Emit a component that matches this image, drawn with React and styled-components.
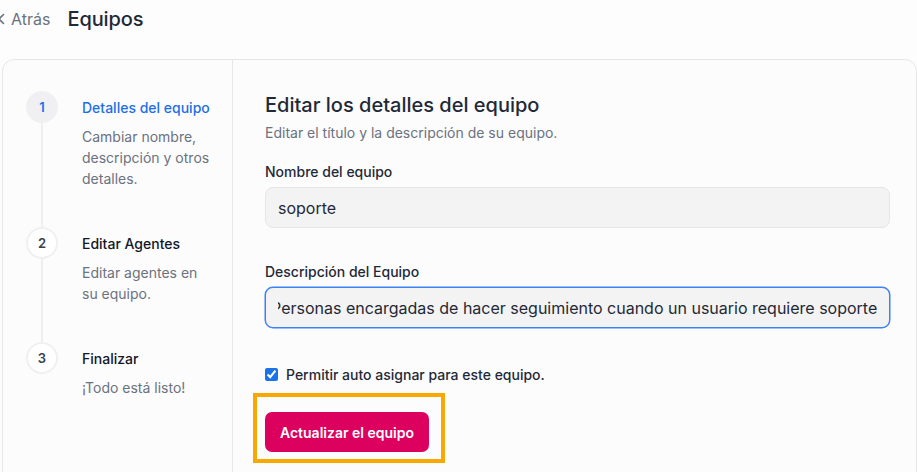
import React, { useEffect, useRef } from "react";
import styled, { createGlobalStyle } from "styled-components";

const Global = createGlobalStyle`
  html, body { margin: 0; padding: 0; background: #fdfdfd; }
  body { font-family: Inter, "Noto Sans", sans-serif; color: #1f2937; overflow: hidden; }
  * { box-sizing: border-box; }
`;

const Page = styled.div`
  width: 917px;
  height: 472px;
  overflow: hidden;
`;

const Header = styled.header`
  display: flex;
  align-items: center;
  height: 38px;
  padding-left: 0;
  gap: 17px;
`;

const Back = styled.a`
  display: flex;
  align-items: center;
  gap: 5px;
  margin-left: -3px;
  color: #6b7280;
  font-size: 16px;
  text-decoration: none;
`;

const Title = styled.h1`
  margin: 0;
  font-size: 20px;
  font-weight: 500;
  color: #1f2937;
  letter-spacing: -0.1px;
`;

const Card = styled.div`
  margin: 21px 0 0 2px;
  display: flex;
  border: 1px solid #e7e7e7;
  border-radius: 12px;
  background: #fcfcfc;
  min-height: 520px;
`;

const Sidebar = styled.nav`
  width: 230px;
  flex-shrink: 0;
  border-right: 1px solid #e7e7e7;
  padding: 31px 0 0 23px;
`;

const Step = styled.div`
  display: flex;
  gap: 24px;
`;

const Rail = styled.div`
  display: flex;
  flex-direction: column;
  align-items: center;
  width: 32px;
  flex-shrink: 0;
`;

const Circle = styled.div`
  width: 32px;
  height: 32px;
  border-radius: 50%;
  display: flex;
  align-items: center;
  justify-content: center;
  font-size: 13px;
  font-weight: 600;
  background: ${(p) => (p.$active ? "#f0f0f3" : "#ffffff")};
  border: 2px solid ${(p) => (p.$active ? "#f0f0f3" : "#f0f0f0")};
  color: ${(p) => (p.$active ? "#1d6ee8" : "#374151")};
`;

const Line = styled.div`
  width: 2px;
  flex: 1;
  background: #eeeeee;
`;

const StepBody = styled.div`
  padding-bottom: 38px;
`;

const StepTitle = styled.div`
  height: 32px;
  display: flex;
  align-items: center;
  font-size: 14px;
  font-weight: 500;
  color: ${(p) => (p.$active ? "#1d6ee8" : "#111827")};
`;

const StepDesc = styled.div`
  margin-top: 3px;
  font-size: 14px;
  line-height: 21px;
  color: #6b7280;
  width: 130px;
`;

const Main = styled.main`
  flex: 1;
  padding: 31px 26px 0 32px;
  display: flex;
  flex-direction: column;
`;

const Heading = styled.h2`
  margin: 0;
  font-size: 20px;
  line-height: 28px;
  font-weight: 500;
  color: #1f2937;
`;

const Sub = styled.p`
  margin: 4px 0 0;
  font-size: 14px;
  line-height: 20px;
  color: #6b7280;
`;

const Label = styled.label`
  display: block;
  margin-top: ${(p) => p.$mt}px;
  font-size: 14px;
  line-height: 20px;
  font-weight: 500;
  color: #1f2937;
`;

const Input = styled.input`
  display: block;
  width: 100%;
  height: 41px;
  margin-top: 5px;
  padding: 0 12px;
  font-family: Inter, "Noto Sans", sans-serif;
  font-size: 16px;
  color: #1f2937;
  background: #f3f3f3;
  border: 1px solid ${(p) => (p.$focus ? "#3b82f6" : "#e6e6e6")};
  border-radius: 8px;
  outline: none;
  box-shadow: ${(p) => (p.$focus ? "0 0 0 0.5px #3b82f6" : "none")};
`;

const CheckRow = styled.label`
  margin-top: 36px;
  display: flex;
  align-items: center;
  gap: 8px;
  height: 20px;
  font-size: 14px;
  font-weight: 500;
  color: #1f2937;
`;

const Check = styled.input`
  margin: 0;
  width: 13px;
  height: 13px;
  accent-color: #1a73e8;
`;

const ButtonWrap = styled.div`
  position: relative;
  margin-top: 28px;
  align-self: flex-start;
  &::after {
    content: "";
    position: absolute;
    top: -19px;
    left: -12px;
    right: -16px;
    bottom: -11px;
    border: 4px solid #f8a800;
    pointer-events: none;
  }
`;

const Button = styled.button`
  display: block;
  width: 164px;
  height: 40px;
  border: none;
  border-radius: 7px;
  background: #dc005f;
  color: #ffffff;
  font-family: Inter, "Noto Sans", sans-serif;
  font-size: 14px;
  font-weight: 600;
  cursor: pointer;
`;

const steps = [
  { n: 1, title: "Detalles del equipo", desc: "Cambiar nombre, descripción y otros detalles.", active: true },
  { n: 2, title: "Editar Agentes", desc: "Editar agentes en su equipo." },
  { n: 3, title: "Finalizar", desc: "¡Todo está listo!" },
];

export default function App() {
  const descRef = useRef(null);
  useEffect(() => {
    if (descRef.current) descRef.current.scrollLeft = descRef.current.scrollWidth;
  }, []);
  return (
    <Page>
      <Global />
      <Header>
        <Back href="#">
          <svg width="9" height="12" viewBox="0 0 9 12" fill="none" stroke="#6b7280" strokeWidth="1.6" strokeLinecap="round" strokeLinejoin="round">
            <path d="M6.5 1.5 2 6l4.5 4.5" />
          </svg>
          Atrás
        </Back>
        <Title>Equipos</Title>
      </Header>
      <Card>
        <Sidebar>
          {steps.map((s, i) => (
            <Step key={s.n}>
              <Rail>
                <Circle $active={s.active}>{s.n}</Circle>
                {i < steps.length - 1 && <Line />}
              </Rail>
              <StepBody>
                <StepTitle $active={s.active}>{s.title}</StepTitle>
                <StepDesc>{s.desc}</StepDesc>
              </StepBody>
            </Step>
          ))}
        </Sidebar>
        <Main>
          <Heading>Editar los detalles del equipo</Heading>
          <Sub>Editar el título y la descripción de su equipo.</Sub>
          <Label $mt={19}>Nombre del equipo</Label>
          <Input defaultValue="soporte" />
          <Label $mt={34}>Descripción del Equipo</Label>
          <Input
            ref={descRef}
            $focus
            defaultValue="Personas encargadas de hacer seguimiento cuando un usuario requiere soporte"
          />
          <CheckRow>
            <Check type="checkbox" defaultChecked />
            Permitir auto asignar para este equipo.
          </CheckRow>
          <ButtonWrap>
            <Button>Actualizar el equipo</Button>
          </ButtonWrap>
        </Main>
      </Card>
    </Page>
  );
}
